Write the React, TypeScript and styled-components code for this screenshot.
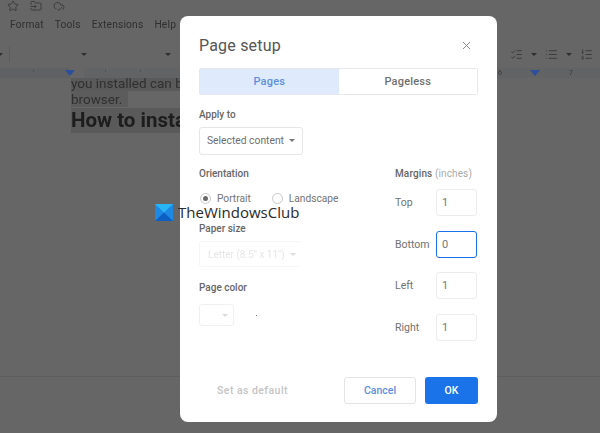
import React from "react";
import styled, { createGlobalStyle } from "styled-components";
import { Star, FolderInput, CloudCheck, ListChecks, List, ListOrdered, X } from "lucide-react";

const Global = createGlobalStyle`
  html, body { margin: 0; padding: 0; width: 600px; height: 433px; overflow: hidden; background: #666; }
  * { box-sizing: border-box; }
  body { font-family: Roboto, "Liberation Sans", sans-serif; }
`;

const Page = styled.div`
  position: relative; width: 600px; height: 433px; background: #666; overflow: hidden;
`;
const Backdrop = styled.div`
  display: flex; flex-direction: column; height: 100%; color: #2e2e2e; filter: blur(0.6px);
`;
const TopIcons = styled.div`
  display: flex; gap: 10px; padding: 0 0 0 7px; height: 11px; align-items: flex-end; color: #303030;
  margin-bottom: 6px;
`;
const IconClip = styled.div`
  width: 13px; height: 11px; display: flex; align-items: center;
`;
const Menu = styled.div`
  display: flex; gap: 11px; padding: 0 0 0 10px; height: 16px; font-size: 10.2px; line-height: 16px;
  color: #2f2f2f; letter-spacing: .2px;
`;
const Toolbar = styled.div`
  display: flex; align-items: center; height: 20px; margin-top: 11px; margin-left: -3px;
`;
const Caret = styled.span`
  width: 0; height: 0; border-left: 3px solid transparent; border-right: 3px solid transparent;
  border-top: 3px solid #2f2f2f; flex: none;
`;
const Divider = styled.span`
  width: 1px; height: 16px; background: #5c5c5c; margin: 0 71px 0 6px; flex: none;
`;
const Spacer = styled.span`
  width: 78px; flex: none;
`;
const ToolRight = styled.div`
  display: flex; align-items: center; color: #333; margin-left: 339px; flex: none;
`;
const ToolGroup = styled.div`
  display: flex; align-items: center; gap: 8px; width: 35px; flex: none;
`;
const Ruler = styled.div`
  position: relative; height: 10px; margin-top: 4px;
  background: linear-gradient(90deg, #5f6164 0 70px, #666 70px 84px, #626365 84px 100%);
`;
const RulerMark = styled.span<{ $left: number }>`
  position: absolute; left: ${p => p.$left}px; top: 2px;
  width: 0; height: 0; border-left: 5px solid transparent; border-right: 5px solid transparent;
  border-top: 6px solid #2c4f9c;
`;
const RulerNum = styled.span<{ $left: number }>`
  position: absolute; left: ${p => p.$left}px; top: 0; font-size: 7px; line-height: 10px; color: #3a3a3a;
`;
const Doc = styled.div`
  display: flex; flex-direction: column; align-items: flex-start; padding-left: 71px; flex: 1; margin-top: -3px;
`;
const DocLine = styled.div`
  font-size: 13.5px; line-height: 16px; color: #2f2f2f; background: #5a5a5a; white-space: nowrap; padding-right: 40px;
`;
const DocShort = styled(DocLine)`
  padding-right: 0; background: #5c5c5c; width: 57px;
`;
const DocHead = styled.div`
  font-size: 20.5px; line-height: 25px; font-weight: 700; color: #1d1d1d; background: #5a5a5a; white-space: nowrap;
  padding-right: 40px; margin-top: 1px;
`;
const BottomRule = styled.div`
  height: 1px; background: #5d5d5d; margin-bottom: 56px;
`;

const Dialog = styled.div`
  position: absolute; left: 180px; top: 16px; width: 317px; height: 406px; background: #fff; border-radius: 8px;
  padding: 0 19px 18px; display: flex; flex-direction: column;
`;
const Header = styled.div`
  display: flex; justify-content: space-between; align-items: center; height: 52px; padding-top: 6px;
`;
const Title = styled.h2`
  margin: 0; font-size: 16px; font-weight: 400; color: #555; letter-spacing: .2px;
`;
const Close = styled.span`
  display: flex; color: #777; margin-right: 5px;
`;
const Tabs = styled.div`
  display: grid; grid-template-columns: 1fr 1fr; height: 27px; border: 1px solid #e6e8ee; border-radius: 2px;
`;
const Tab = styled.div<{ $active?: boolean }>`
  display: flex; align-items: center; justify-content: center; font-size: 11px; font-weight: 500; letter-spacing: .2px;
  background: ${p => (p.$active ? "#dfeafc" : "#fff")}; color: ${p => (p.$active ? "#5f8fdc" : "#6f6f6f")};
`;
const Label = styled.div`
  font-size: 10px; font-weight: 500; color: #666; line-height: 14px;
`;
const ApplyLabel = styled(Label)`
  margin-top: 13px;
`;
const Select = styled.div`
  display: inline-flex; align-items: center; justify-content: space-between; width: 104px; height: 28px; margin-top: 5px;
  border: 1px solid #e6e6e6; border-radius: 3px; padding: 0 7px 1px; font-size: 10.3px; color: #6e6e6e;
`;
const SmallCaret = styled.span`
  width: 0; height: 0; border-left: 3px solid transparent; border-right: 3px solid transparent; border-top: 3px solid #777;
`;
const Columns = styled.div`
  display: grid; grid-template-columns: 196px 83px; flex: 1; margin-top: 12px;
`;
const LeftCol = styled.div`
  display: flex; flex-direction: column; align-items: flex-start;
`;
const RadioRow = styled.div`
  display: flex; align-items: center; height: 14px; margin-top: 10px; font-size: 10.2px; color: #747474; padding-left: 1px;
`;
const Radio = styled.span<{ $on?: boolean }>`
  width: 11px; height: 11px; border-radius: 50%; border: 1px solid #c9c9c9; margin-right: 6px;
  display: flex; align-items: center; justify-content: center;
  &::after { content: ""; width: 5px; height: 5px; border-radius: 50%; background: ${p => (p.$on ? "#6a6a6a" : "transparent")}; }
`;
const RadioText = styled.span`
  margin-right: 21px;
`;
const PaperLabel = styled(Label)`
  margin-top: 17px;
`;
const PaperSelect = styled.div`
  display: flex; align-items: center; width: 102px; height: 26px; margin-top: 5px; padding-left: 8px; gap: 5px;
  border: 1px solid #f6f6f6; border-right: none; border-radius: 3px; font-size: 10px; color: #e6e6e6; white-space: nowrap; filter: blur(.5px);
`;
const ColorLabel = styled(Label)`
  margin-top: 14px;
`;
const ColorRow = styled.div`
  display: flex; align-items: center; gap: 22px; margin-top: 9px;
`;
const Swatch = styled.div`
  display: flex; align-items: center; justify-content: flex-end; width: 35px; height: 22px;
  border: 1px solid #f0f0f0; border-radius: 3px; padding-right: 5px;
`;
const Dot = styled.span`
  width: 1px; height: 1px; background: #777;
`;
const FaintCaret = styled(SmallCaret)`
  border-top-color: #dcdcdc;
`;
const MarginsLabel = styled(Label)`
  white-space: nowrap; margin-bottom: 8px; letter-spacing: .12px;
`;
const Muted = styled.span`
  font-weight: 400; color: #a9a9a9;
`;
const MarginRow = styled.div`
  display: grid; grid-template-columns: 41px 41px; align-items: center; height: 27px; margin-bottom: 14.7px;
  font-size: 10.5px; color: #707070; white-space: nowrap;
`;
const MarginInput = styled.div<{ $focus?: boolean }>`
  height: 27px; border-radius: 3px; display: flex; align-items: center; padding-left: 5px; font-size: 11px; color: #777;
  border: ${p => (p.$focus ? "1.5px solid #1a73e8" : "1px solid #ececec")};
`;
const Footer = styled.div`
  display: grid; grid-template-columns: 1fr 72px 53px; column-gap: 9px; height: 27px; align-items: stretch;
`;
const DefaultBtn = styled.div`
  display: flex; align-items: center; padding-left: 18px; font-size: 10.5px; font-weight: 500; color: #c4c4c4; letter-spacing: .45px;
`;
const CancelBtn = styled.div`
  display: flex; align-items: center; justify-content: center; border: 1px solid #e4e4e4; border-radius: 3px;
  font-size: 10.5px; font-weight: 500; color: #5b8fe0;
`;
const OkBtn = styled.div`
  display: flex; align-items: center; justify-content: center; background: #1a73e8; border-radius: 3px;
  font-size: 10.5px; font-weight: 500; color: #fff;
`;
const Watermark = styled.div`
  position: absolute; left: 155px; top: 204px; display: flex; align-items: center; gap: 5px;
  font-size: 15px; color: #2a2a2a; font-family: "Open Sans", Roboto, sans-serif; line-height: 17px;
`;
const Logo = styled.svg`
  width: 18px; height: 17px; display: block; flex: none;
`;

const margins: { name: string; value: string; focus?: boolean }[] = [
  { name: "Top", value: "1" },
  { name: "Bottom", value: "0", focus: true },
  { name: "Left", value: "1" },
  { name: "Right", value: "1" },
];

export default function App() {
  return (
    <Page>
      <Global />
      <Backdrop>
        <TopIcons>
          <IconClip><Star size={12} strokeWidth={1.5} /></IconClip>
          <IconClip><FolderInput size={12} strokeWidth={1.5} /></IconClip>
          <IconClip><CloudCheck size={12} strokeWidth={1.5} /></IconClip>
        </TopIcons>
        <Menu>
          <span>Format</span><span>Tools</span><span>Extensions</span><span>Help</span>
        </Menu>
        <Toolbar>
          <Caret />
          <Divider />
          <Caret />
          <Spacer />
          <Caret />
          <ToolRight>
            <ToolGroup><ListChecks size={13} strokeWidth={1.5} /><Caret /></ToolGroup>
            <ToolGroup><List size={13} strokeWidth={1.5} /><Caret /></ToolGroup>
            <ToolGroup><ListOrdered size={13} strokeWidth={1.5} /><Caret /></ToolGroup>
          </ToolRight>
        </Toolbar>
        <Ruler>
          <RulerNum $left={33}>'</RulerNum>
          <RulerMark $left={65} />
          <RulerNum $left={105}>'</RulerNum>
          <RulerNum $left={140}>'</RulerNum>
          <RulerMark $left={530} />
          <RulerNum $left={498}>6</RulerNum>
          <RulerNum $left={569}>7</RulerNum>
        </Ruler>
        <Doc>
          <DocLine>you installed can be</DocLine>
          <DocShort>browser.</DocShort>
          <DocHead>How to install</DocHead>
        </Doc>
        <BottomRule />
      </Backdrop>
      <Dialog>
        <Header>
          <Title>Page setup</Title>
          <Close><X size={13} strokeWidth={1.6} /></Close>
        </Header>
        <Tabs>
          <Tab $active>Pages</Tab>
          <Tab>Pageless</Tab>
        </Tabs>
        <ApplyLabel>Apply to</ApplyLabel>
        <div>
          <Select>Selected content <SmallCaret /></Select>
        </div>
        <Columns>
          <LeftCol>
            <Label>Orientation</Label>
            <RadioRow>
              <Radio $on /><RadioText>Portrait</RadioText>
              <Radio /><span>Landscape</span>
            </RadioRow>
            <PaperLabel>Paper size</PaperLabel>
            <PaperSelect>Letter (8.5" x 11") <FaintCaret /></PaperSelect>
            <ColorLabel>Page color</ColorLabel>
            <ColorRow>
              <Swatch><FaintCaret /></Swatch>
              <Dot />
            </ColorRow>
          </LeftCol>
          <div>
            <MarginsLabel>Margins <Muted>(inches)</Muted></MarginsLabel>
            {margins.map(m => (
              <MarginRow key={m.name}>
                <span>{m.name}</span>
                <MarginInput $focus={m.focus}>{m.value}</MarginInput>
              </MarginRow>
            ))}
          </div>
        </Columns>
        <Footer>
          <DefaultBtn>Set as default</DefaultBtn>
          <CancelBtn>Cancel</CancelBtn>
          <OkBtn>OK</OkBtn>
        </Footer>
      </Dialog>
      <Watermark>
        <Logo viewBox="0 0 18 17">
          <path d="M0 0h18v17H0z" fill="#1e88e5" />
          <path d="M0 0l9 8.5L18 0z" fill="#29b6f6" />
          <path d="M0 17l9-8.5L18 17z" fill="#0d5fc4" />
        </Logo>
        <span>TheWindowsClub</span>
      </Watermark>
    </Page>
  );
}
